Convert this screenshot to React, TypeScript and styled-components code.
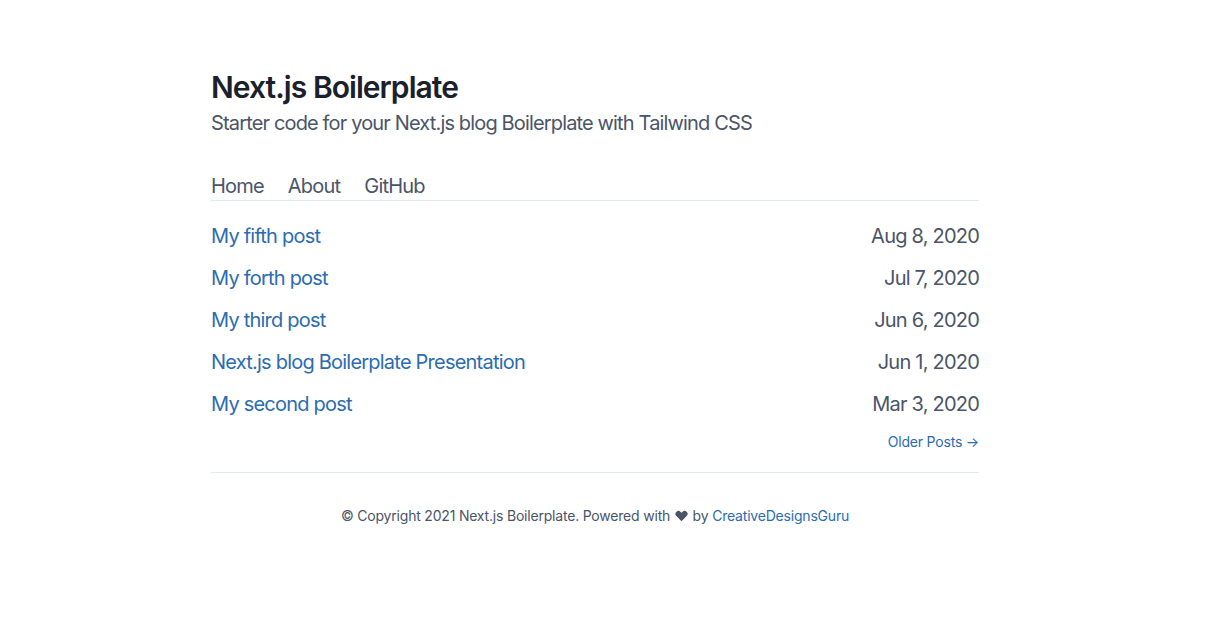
import React from "react";
import styled, { createGlobalStyle } from "styled-components";

const GlobalStyle = createGlobalStyle`
  html, body { margin: 0; padding: 0; background: #ffffff; }
  body {
    font-family: Inter, "Noto Sans", Arial, sans-serif;
    color: #4a5568;
    -webkit-font-smoothing: antialiased;
  }
  * { box-sizing: border-box; }
  a { text-decoration: none; }
`;

const Page = styled.div`
  width: 768px;
  margin-left: 211px;
`;

const Header = styled.header`
  padding-top: 69px;
`;

const Title = styled.div`
  font-size: 30px;
  line-height: 36px;
  font-weight: 600;
  color: #1a202c;
  letter-spacing: -0.95px;
  margin-bottom: 4px;
`;

const Subtitle = styled.div`
  font-size: 20px;
  line-height: 28px;
  letter-spacing: -0.85px;
`;

const Nav = styled.ul`
  display: flex;
  list-style: none;
  margin: 35px 0 0;
  padding: 0;
  font-size: 20px;
  line-height: 28px;
  letter-spacing: -0.8px;
  border-bottom: 1px solid #e2e8f0;
`;

const NavItem = styled.li`
  margin-right: 24px;
  a { color: #4a5568; }
`;

const Main = styled.main`
  padding: 21px 0 20px;
  border-bottom: 1px solid #e2e8f0;
`;

const PostList = styled.ul`
  list-style: none;
  margin: 0 0 14px;
  padding: 0;
  display: flex;
  flex-direction: column;
  gap: 14px;
  font-size: 20px;
  line-height: 28px;
  letter-spacing: -0.78px;
`;

const PostRow = styled.li`
  display: flex;
  justify-content: space-between;
  a { color: #2b6cb0; }
`;

const PostDate = styled.span`
  color: #4a5568;
`;

const Pagination = styled.div`
  display: flex;
  justify-content: flex-end;
  font-size: 14px;
  line-height: 20px;
  letter-spacing: -0.2px;
  a { color: #2b6cb0; }
`;

const Footer = styled.footer`
  padding-top: 33px;
  text-align: center;
  font-size: 14px;
  line-height: 20px;
  letter-spacing: -0.2px;
  a { color: #2b6cb0; }
`;

const Heart = styled.svg`
  width: 15px;
  height: 15px;
  vertical-align: -2px;
`;

const posts = [
  { title: "My fifth post", date: "Aug 8, 2020" },
  { title: "My forth post", date: "Jul 7, 2020" },
  { title: "My third post", date: "Jun 6, 2020" },
  { title: "Next.js blog Boilerplate Presentation", date: "Jun 1, 2020" },
  { title: "My second post", date: "Mar 3, 2020" },
];

export default function App() {
  return (
    <>
      <GlobalStyle />
      <Page>
        <Header>
          <Title>Next.js Boilerplate</Title>
          <Subtitle>Starter code for your Next.js blog Boilerplate with Tailwind CSS</Subtitle>
        </Header>
        <Nav>
          <NavItem><a href="#">Home</a></NavItem>
          <NavItem><a href="#">About</a></NavItem>
          <NavItem><a href="#">GitHub</a></NavItem>
        </Nav>
        <Main>
          <PostList>
            {posts.map((p) => (
              <PostRow key={p.title}>
                <a href="#">{p.title}</a>
                <PostDate>{p.date}</PostDate>
              </PostRow>
            ))}
          </PostList>
          <Pagination>
            <a href="#">Older Posts →</a>
          </Pagination>
        </Main>
        <Footer>
          © Copyright 2021 Next.js Boilerplate. Powered with{" "}
          <Heart viewBox="0 0 20 20" fill="#4a5568">
            <path d="M3.172 5.172a4 4 0 015.656 0L10 6.343l1.172-1.171a4 4 0 115.656 5.656L10 17.657l-6.828-6.829a4 4 0 010-5.656z" />
          </Heart>{" "}
          by <a href="#">CreativeDesignsGuru</a>
        </Footer>
      </Page>
    </>
  );
}
